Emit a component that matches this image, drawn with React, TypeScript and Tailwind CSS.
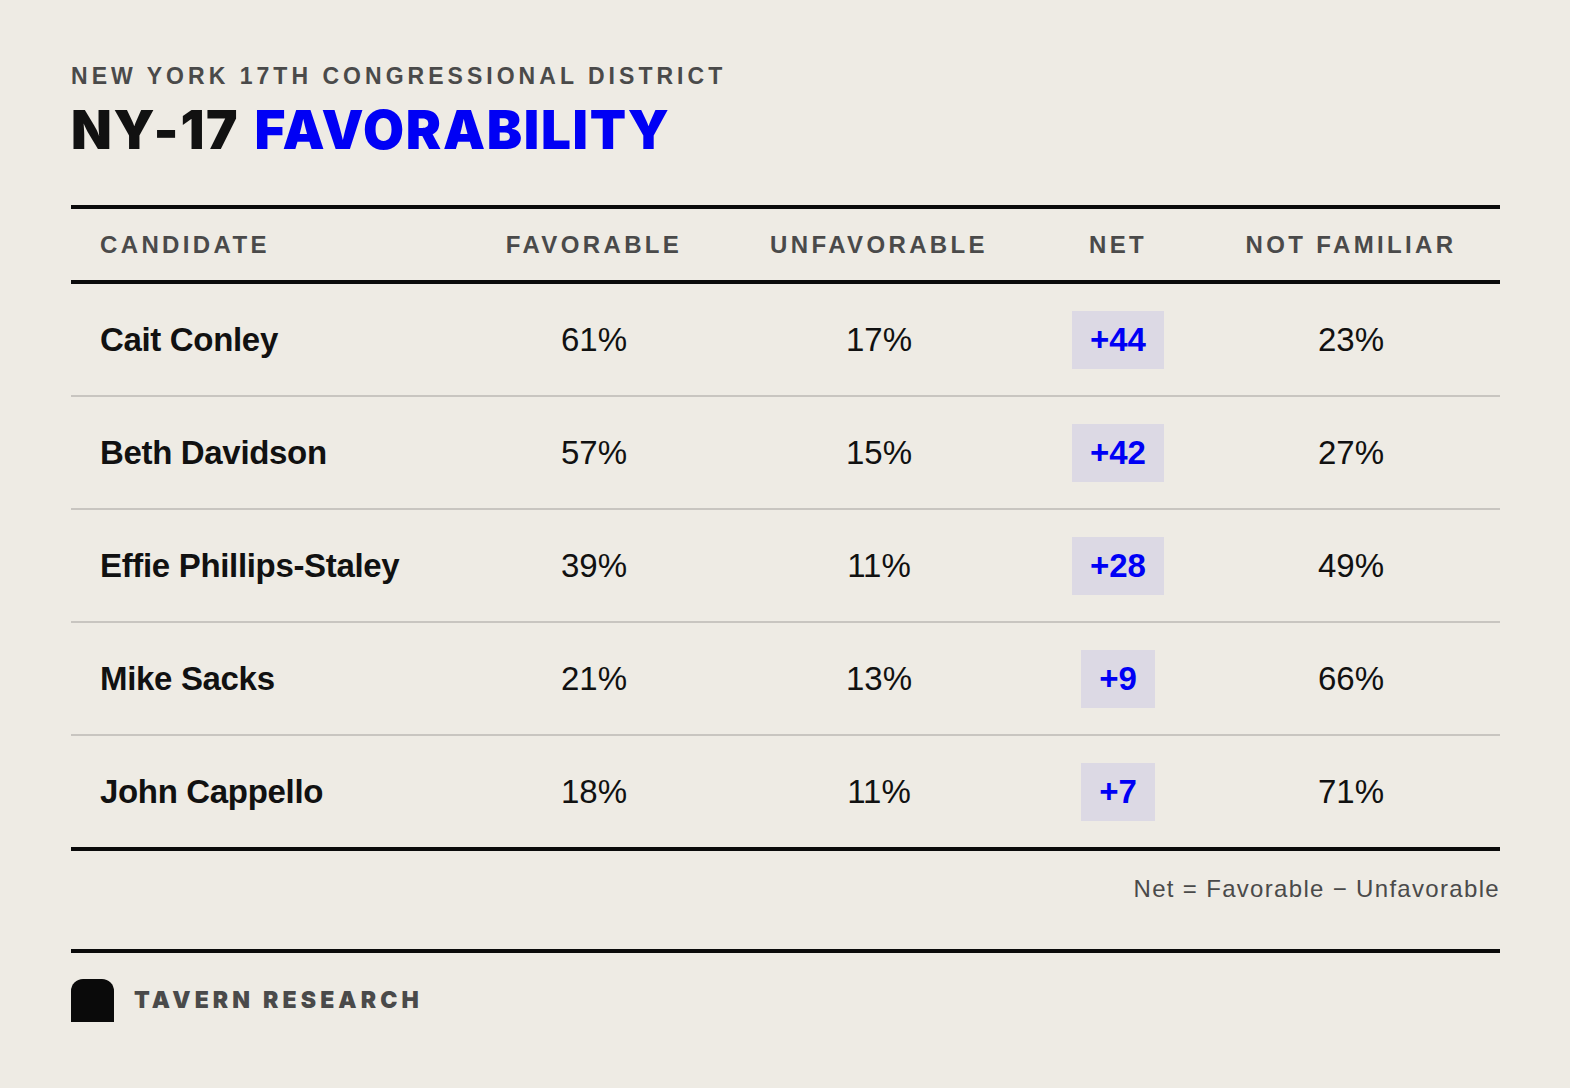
const rows = [
  { name: "Cait Conley", fav: "61%", unfav: "17%", net: "+44", nf: "23%" },
  { name: "Beth Davidson", fav: "57%", unfav: "15%", net: "+42", nf: "27%" },
  { name: "Effie Phillips-Staley", fav: "39%", unfav: "11%", net: "+28", nf: "49%" },
  { name: "Mike Sacks", fav: "21%", unfav: "13%", net: "+9", nf: "66%" },
  { name: "John Cappello", fav: "18%", unfav: "11%", net: "+7", nf: "71%" },
];

const cols = "grid grid-cols-[393px_260px_310px_168px_1fr] items-center";
const body = { fontFamily: '"Liberation Sans", Arial, sans-serif' };
const heavy = { fontFamily: 'Inter, "Liberation Sans", Arial, sans-serif' };

export default function App() {
  return (
    <div className="min-h-screen w-full bg-[#eeebe4] text-[#111111]" style={body}>
      <div className="ml-[71px] mr-[70px] pt-[62px] pb-[60px]">
        <div className="text-[23px] leading-[28px] font-bold uppercase tracking-[0.175em] text-[#4a4a4a]">
          New York 17th Congressional District
        </div>
        <h1 className="mt-[14px] text-[53px] leading-[52px] font-black tracking-[0.032em] [word-spacing:3px]" style={heavy}>
          NY-17 <span className="text-[#0000f5]">FAVORABILITY</span>
        </h1>

        <div className="mt-[49px] border-t-4 border-b-4 border-[#0a0a0a]">
          <div className={`${cols} h-[75px] border-b-4 border-[#0a0a0a] text-[24px] font-bold uppercase tracking-[0.14em] text-[#4a4a4a]`}>
            <div className="pl-[29px]">Candidate</div>
            <div className="text-center">Favorable</div>
            <div className="text-center">Unfavorable</div>
            <div className="text-center">Net</div>
            <div className="text-center">Not Familiar</div>
          </div>
          {rows.map((r, i) => (
            <div
              key={r.name}
              className={`${cols} text-[33px] ${i > 0 ? "h-[113px] border-t-2 border-[#c8c5c0]" : "h-[111px]"}`}
            >
              <div className="pl-[29px] font-bold tracking-[-0.01em]">{r.name}</div>
              <div className="text-center">{r.fav}</div>
              <div className="text-center">{r.unfav}</div>
              <div className="flex justify-center">
                <span className="flex h-[58px] items-center bg-[#dcd9e4] px-[18px] font-bold text-[#0000f5]">
                  {r.net}
                </span>
              </div>
              <div className="text-center">{r.nf}</div>
            </div>
          ))}
        </div>

        <div className="mt-[24px] text-right text-[24px] leading-[28px] tracking-[0.055em] text-[#4a4a4a]">
          Net = Favorable − Unfavorable
        </div>

        <div className="mt-[46px] border-t-4 border-[#0a0a0a]" />
        <div className="mt-[26px] flex items-center gap-[20px]">
          <div className="h-[43px] w-[43px] rounded-t-[12px] bg-[#0a0a0a]" />
          <div className="text-[23px] font-black uppercase tracking-[0.18em] text-[#4a4a4a]" style={heavy}>
            Tavern Research
          </div>
        </div>
      </div>
    </div>
  );
}
